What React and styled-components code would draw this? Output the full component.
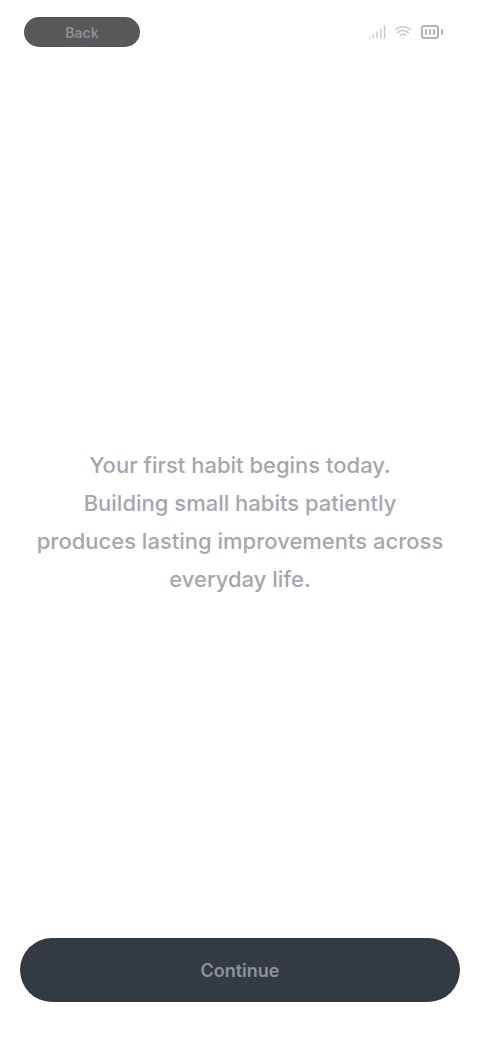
import React from "react";
import styled, { createGlobalStyle } from "styled-components";
import { Signal, Wifi, BatteryFull } from "lucide-react";

const GlobalStyle = createGlobalStyle`
  html, body {
    margin: 0;
    padding: 0;
    background: #ffffff;
  }
  body {
    font-family: Inter, "Noto Sans", sans-serif;
  }
`;

const Screen = styled.div`
  width: 480px;
  height: 1040px;
  box-sizing: border-box;
  display: flex;
  flex-direction: column;
  background: #ffffff;
  padding: 14px 20px 38px;
`;

const TopBar = styled.div`
  display: flex;
  align-items: center;
  justify-content: space-between;
  height: 36px;
  padding: 0 4px;
`;

const Pill = styled.div`
  width: 116px;
  height: 30px;
  border-radius: 15px;
  background: #58585b;
  color: #8d8d90;
  display: flex;
  align-items: center;
  justify-content: center;
  font-size: 14px;
  font-weight: 600;
`;

const StatusIcons = styled.div`
  display: flex;
  align-items: center;
  gap: 8px;
  color: #c9c9cc;
  padding-right: 12px;
`;

const Body = styled.div`
  flex: 1;
  display: flex;
  align-items: center;
  justify-content: center;
  padding-top: 56px;
`;

const Message = styled.p`
  margin: 0;
  text-align: center;
  font-size: 22px;
  line-height: 38px;
  font-weight: 500;
  color: #a4a7ad;
`;

const PrimaryButton = styled.button`
  height: 64px;
  width: 100%;
  border: none;
  border-radius: 32px;
  background: #343a42;
  color: #8c929a;
  font-family: Inter, "Noto Sans", sans-serif;
  font-size: 18px;
  font-weight: 600;
  cursor: pointer;
`;

function App() {
  return (
    <>
      <GlobalStyle />
      <Screen>
        <TopBar>
          <Pill>Back</Pill>
          <StatusIcons>
            <Signal size={18} />
            <Wifi size={18} />
            <BatteryFull size={24} color="#b5b5b8" />
          </StatusIcons>
        </TopBar>
        <Body>
          <Message>
            Your first habit begins today.
            <br />
            Building small habits patiently
            <br />
            produces lasting improvements across
            <br />
            everyday life.
          </Message>
        </Body>
        <PrimaryButton>Continue</PrimaryButton>
      </Screen>
    </>
  );
}

export default App;
